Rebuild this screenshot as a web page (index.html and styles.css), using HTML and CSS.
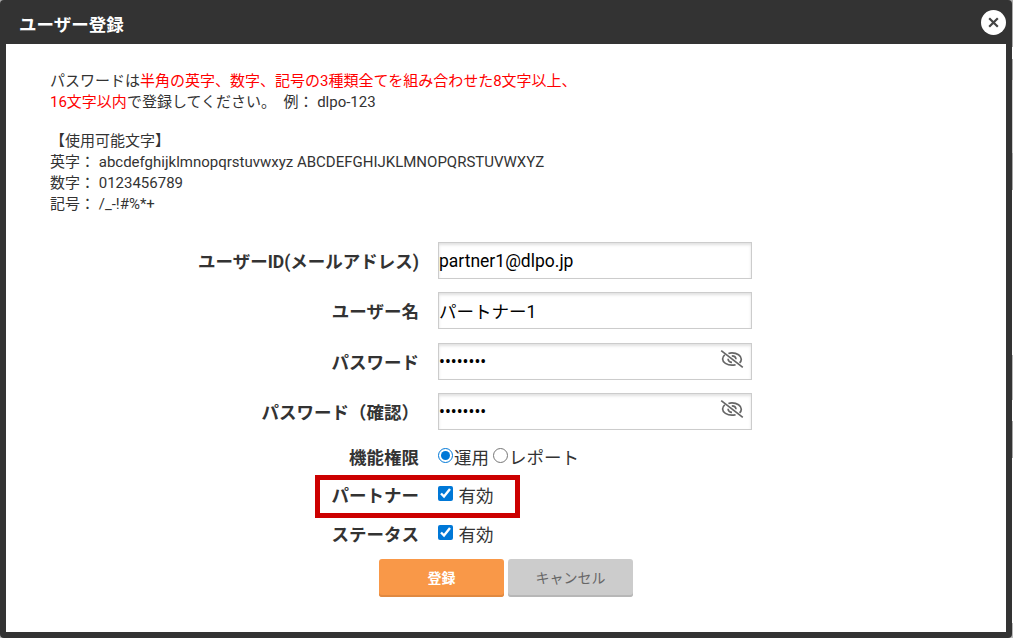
FILE: index.html
```html
<!DOCTYPE html>
<html lang="ja">
<head>
<meta charset="utf-8">
<title>ユーザー登録</title>
<link rel="stylesheet" href="styles.css">
</head>
<body>
<div class="modal">
	<div class="modal_head">
		<h1>ユーザー登録</h1>
		<button type="button" class="close" aria-label="close">
			<svg width="11" height="11" viewBox="0 0 11 11"><path d="M1.2 1.2L9.8 9.8M9.8 1.2L1.2 9.8"/></svg>
		</button>
	</div>
	<div class="modal_body">
		<p class="note">パスワードは<span class="red">半角の英字、数字、記号の3種類全てを組み合わせた8文字以上、<br>16文字以内</span>で登録してください。&nbsp; 例： dlpo-123</p>
		<p class="note chars">【使用可能文字】<br>英字： abcdefghijklmnopqrstuvwxyz ABCDEFGHIJKLMNOPQRSTUVWXYZ<br>数字： 0123456789<br>記号： /_-!#%*+</p>

		<form class="form">
			<div class="row">
				<label class="name" for="mail">ユーザーID(メールアドレス)</label>
				<input class="text" type="text" id="mail" value="partner1@dlpo.jp">
			</div>
			<div class="row">
				<label class="name" for="user">ユーザー名</label>
				<input class="text" type="text" id="user" value="パートナー1">
			</div>
			<div class="row row_pass">
				<label class="name" for="pass">パスワード</label>
				<div class="pass">
					<input class="text" type="password" id="pass" value="password">
					<svg class="eye" width="24" height="20" viewBox="0 0 24 20"><path d="M1.2 1.6L22.8 18.4M8.4 4.5C9.5 4.1 10.7 3.9 12 3.9C17 3.9 21.3 6.8 21.3 10.2C21.3 11.6 20.7 12.8 19.6 13.8M4.8 5.9C3.4 7 2.6 8.6 2.6 10.1C2.6 13.4 7 16.2 12 16.2C13.3 16.2 14.5 16 15.6 15.7M11.8 6.8C14.2 6.8 15.9 8.3 16 10.3M8.1 9.7C8 11.8 9.8 13.3 12 13.3"/></svg>
				</div>
			</div>
			<div class="row">
				<label class="name" for="pass2">パスワード（確認）</label>
				<div class="pass">
					<input class="text" type="password" id="pass2" value="password">
					<svg class="eye" width="24" height="20" viewBox="0 0 24 20"><path d="M1.2 1.6L22.8 18.4M8.4 4.5C9.5 4.1 10.7 3.9 12 3.9C17 3.9 21.3 6.8 21.3 10.2C21.3 11.6 20.7 12.8 19.6 13.8M4.8 5.9C3.4 7 2.6 8.6 2.6 10.1C2.6 13.4 7 16.2 12 16.2C13.3 16.2 14.5 16 15.6 15.7M11.8 6.8C14.2 6.8 15.9 8.3 16 10.3M8.1 9.7C8 11.8 9.8 13.3 12 13.3"/></svg>
				</div>
			</div>
			<div class="row row_s">
				<span class="name">機能権限</span>
				<div class="opt">
					<label><input type="radio" name="role" checked>運用</label>
					<label><input type="radio" name="role">レポート</label>
				</div>
			</div>
			<div class="row row_s marked">
				<span class="name">パートナー</span>
				<div class="opt"><label class="chk"><input type="checkbox" checked>有効</label></div>
			</div>
			<div class="row row_s last">
				<span class="name">ステータス</span>
				<div class="opt"><label class="chk"><input type="checkbox" checked>有効</label></div>
			</div>
			<div class="buttons">
				<button type="button" class="btn btn_ok">登録</button>
				<button type="button" class="btn btn_cancel">キャンセル</button>
			</div>
		</form>
	</div>
</div>
</body>
</html>
```
FILE: styles.css
```css
* {
	box-sizing: border-box;
}
body {
	margin: 0;
	/* edge of the page behind the modal */
	background: linear-gradient(#aaa 47px, #fff 47px, #fff 59px, #aaa 59px, #aaa 80px, #ccc 80px, #ccc 153px, #aaa 153px, #aaa 190px, #fff 190px, #fff 355px, #bbb 355px, #bbb 400px, #fff 400px, #fff 421px, #aaa 421px, #aaa 458px, #fff 458px, #fff 623px, #bbb 623px);
	color: #333;
	font-family: Roboto, "Noto Sans CJK JP", sans-serif;
	font-size: 17.5px;
}
.modal {
	width: 1012px;
	height: 638px;
	padding: 0 6px 6px;
	background: #333;
	border-radius: 4px;
	display: flex;
	flex-direction: column;
}

.modal_head {
	height: 44px;
	padding: 1px 0 0 13px;
	display: flex;
	align-items: center;
	justify-content: space-between;
}
.modal_head h1 {
	margin: 0;
	padding-top: 4px;
	font-size: 17.5px;
	line-height: 26px;
	color: #fff;
}
.close {
	width: 25px;
	height: 25px;
	padding: 0;
	border: 0;
	border-radius: 50%;
	background: #fff;
	display: flex;
	align-items: center;
	justify-content: center;
}
.close path {
	fill: none;
	stroke: #444;
	stroke-width: 2.2;
}

.modal_body {
	flex: 1;
	padding: 27px 44px 0;
	background: #fff;
}
.note {
	margin: 0;
	font-size: 15px;
	line-height: 21px;
}
.chars {
	margin-top: 18px;
}
.red {
	color: #f00;
}

.form {
	margin-top: 27px;
}
.row {
	display: grid;
	grid-template-columns: 369px 314px;
	column-gap: 19px;
	align-items: center;
	height: 37px;
	margin-bottom: 13px;
}
.row_pass {
	margin-top: 14px;
}
.name {
	padding-top: 2px;
	text-align: right;
	font-weight: bold;
	line-height: 26px;
}
.text {
	display: block;
	width: 314px;
	height: 37px;
	padding: 0;
	border: 1px solid #ccc;
	border-radius: 0;
	background: #fff;
	box-shadow: inset 0 2px 3px rgba(0,0,0,0.12);
	color: #000;
	font-family: inherit;
	font-size: 17.5px;
}
.pass {
	position: relative;
}
.eye {
	position: absolute;
	top: 6px;
	right: 8px;
}
.eye path {
	fill: none;
	stroke: #666;
	stroke-width: 1.7;
}

.row_s {
	height: 26px;
	margin: 15px 0 0;
}
.row_s .name {
	padding: 0;
}
.opt {
	display: flex;
	gap: 4px;
	line-height: 26px;
}
.opt label {
	display: flex;
}
.opt input {
	width: 15px;
	height: 15px;
	margin: 3px 1px 0 0;
	accent-color: #0078d7;
}
.opt .chk input {
	margin-right: 5.5px;
}
/* red frame around the partner setting */
.marked {
	width: 205px;
	height: 43px;
	margin: 4px 0 4px 265px;
	padding-bottom: 2px;
	border: 5px solid #c00;
	grid-template-columns: 99px 90px;
	column-gap: 19px;
}
.last {
	margin: 0;
}
.buttons {
	display: flex;
	gap: 4px;
	margin: 11px 0 0 329px;
}
.btn {
	width: 125px;
	height: 38px;
	padding: 0 0 2px;
	border: 0;
	border-radius: 3px;
	font-family: inherit;
	font-size: 14px;
	color: #666;
	background: #ccc;
	box-shadow: inset 0 -2px 0 #b7b7b7;
}
.btn_ok {
	font-weight: bold;
	color: #fff;
	background: #f99848;
	box-shadow: inset 0 -2px 0 #e08941;
}
```
